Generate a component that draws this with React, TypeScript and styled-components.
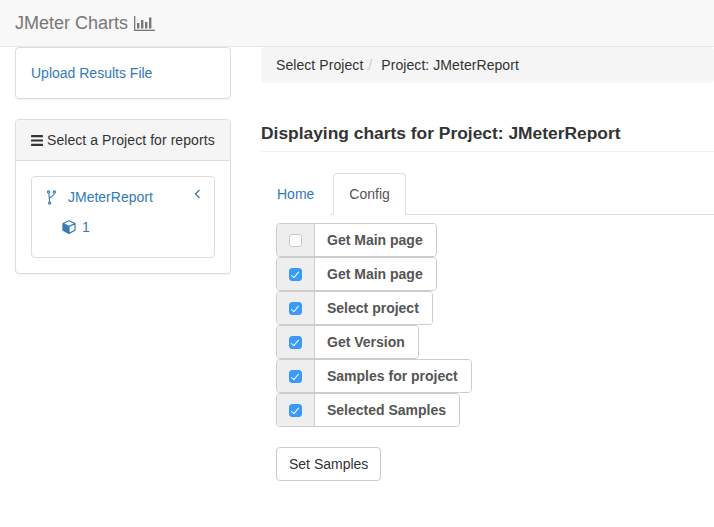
import React from 'react';
import styled, { createGlobalStyle } from 'styled-components';

const GlobalStyle = createGlobalStyle`
    html, body {
        margin: 0;
        padding: 0;
        background: #fff;
    }
    body {
        font-family: "Liberation Sans", Arial, sans-serif;
        font-size: 14px;
        line-height: 20px;
        color: #333;
        overflow: hidden;
    }
    * {
        box-sizing: border-box;
    }
`;

const Navbar = styled.div`
    height: 47px;
    padding: 0 15px;
    display: flex;
    align-items: center;
    gap: 6px;
    background: #f8f8f8;
    border-bottom: 1px solid #e7e7e7;
    color: #777;
    font-size: 18px;
`;

const Layout = styled.div`
    display: grid;
    grid-template-columns: 216px 1fr;
    column-gap: 30px;
    padding-left: 15px;
`;

const Sidebar = styled.div`
    display: flex;
    flex-direction: column;
    gap: 20px;
`;

const Panel = styled.div`
    background: #fff;
    border: 1px solid #ddd;
    border-radius: 4px;
    box-shadow: 0 1px 1px rgba(0, 0, 0, 0.05);
`;

const UploadBody = styled.div`
    height: 50px;
    padding: 15px;
`;

const Link = styled.a`
    color: #337ab7;
    text-decoration: none;
`;

const PanelHeading = styled.div`
    height: 41px;
    padding: 0 15px;
    display: flex;
    align-items: center;
    gap: 4px;
    background: #f5f5f5;
    border-bottom: 1px solid #ddd;
    border-radius: 3px 3px 0 0;
    white-space: nowrap;
    letter-spacing: 0.07px;
`;

const PanelBody = styled.div`
    padding: 15px;
`;

const TreeBox = styled.div`
    height: 82px;
    padding: 5px 15px;
    border: 1px solid #ddd;
    border-radius: 4px;
    color: #337ab7;
`;

const TreeRow = styled.div<{ $indent?: number }>`
    height: 30px;
    display: flex;
    align-items: center;
    padding-left: ${(p) => p.$indent ?? 0}px;
`;

const TreeLabel = styled.span`
    flex: 1;
    margin-left: 12px;
`;

const RowNumber = styled.span`
    margin-left: 6px;
`;

const Main = styled.div`
    min-width: 0;
`;

const Breadcrumb = styled.div`
    height: 36px;
    padding: 0 15px;
    display: flex;
    align-items: center;
    background: #f5f5f5;
    border-radius: 4px;
    color: #333;
    letter-spacing: 0.07px;
`;

const Divider = styled.span`
    padding: 0 5px;
    color: #ccc;
`;

const PageHeader = styled.div`
    margin-top: 38px;
    height: 31px;
    border-bottom: 1px solid #eee;
    font-size: 17.4px;
    font-weight: 700;
    line-height: 24px;
    color: #333;
`;

const TabList = styled.div`
    margin-top: 21px;
    height: 42px;
    display: flex;
    border-bottom: 1px solid #ddd;
`;

const Tab = styled.div<{ $active?: boolean }>`
    height: 42px;
    padding: 0 15px;
    margin-right: 3px;
    display: flex;
    align-items: center;
    border: 1px solid ${(p) => (p.$active ? '#ddd' : 'transparent')};
    border-bottom-color: ${(p) => (p.$active ? '#fff' : 'transparent')};
    border-radius: 4px 4px 0 0;
    background: #fff;
    color: ${(p) => (p.$active ? '#555' : '#337ab7')};
`;

const SampleList = styled.div`
    margin-top: 8px;
    padding-left: 15px;
    display: flex;
    flex-direction: column;
    align-items: flex-start;
`;

const SampleRow = styled.label`
    height: 34px;
    display: flex;
    border: 1px solid #ccc;
    border-radius: 4px;
    overflow: hidden;
`;

const Addon = styled.span`
    width: 38px;
    display: flex;
    align-items: center;
    justify-content: center;
    background: #eee;
    border-right: 1px solid #ccc;
`;

const Checkbox = styled.input.attrs({ type: 'checkbox', readOnly: true })`
    appearance: none;
    position: relative;
    width: 13px;
    height: 13px;
    margin: 0;
    border: 1px solid #c8c8c8;
    border-radius: 3px;
    background: #fff;

    &:checked {
        background: #3b99fc;
        border-color: #3b99fc;
    }

    &:checked::after {
        content: '';
        position: absolute;
        left: 3px;
        top: 1px;
        width: 3px;
        height: 7px;
        border: solid #fff;
        border-width: 0 1.5px 1.5px 0;
        transform: rotate(40deg);
    }
`;

const SampleName = styled.span`
    padding: 0 13px 0 12px;
    display: flex;
    align-items: center;
    font-weight: 700;
    color: #555;
    background: #fff;
    white-space: nowrap;
`;

const Button = styled.button`
    margin-top: 20px;
    height: 34px;
    padding: 0 12px;
    border: 1px solid #ccc;
    border-radius: 4px;
    background: #fff;
    color: #333;
    font: inherit;
`;

const ChartIcon = () => (
    <svg width="21" height="15" viewBox="0 0 21 15" fill="currentColor">
        <rect x="0" y="0" width="1.3" height="15" />
        <rect x="0" y="13.7" width="21" height="1.3" />
        <rect x="3" y="7" width="2.4" height="5.5" />
        <rect x="7" y="4" width="2.4" height="8.5" />
        <rect x="11" y="6" width="2.4" height="6.5" />
        <rect x="15" y="1.5" width="2.4" height="11" />
    </svg>
);

const MenuIcon = () => (
    <svg width="12" height="11" viewBox="0 0 12 11" fill="currentColor">
        <rect x="0" y="0" width="12" height="2.2" rx="0.4" />
        <rect x="0" y="4.4" width="12" height="2.2" rx="0.4" />
        <rect x="0" y="8.8" width="12" height="2.2" rx="0.4" />
    </svg>
);

const ForkIcon = () => (
    <svg width="9" height="15" viewBox="0 0 9 15" fill="none" stroke="currentColor" strokeWidth="1.1">
        <circle cx="1.6" cy="2" r="1.1" />
        <circle cx="7.4" cy="2" r="1.1" />
        <circle cx="2.6" cy="13" r="1.1" />
        <path d="M1.8 3.2 L2.6 11.8 M7.3 3.2 C7.2 6.5 3.2 6.5 2.4 8.5" />
    </svg>
);

const CubeIcon = () => (
    <svg width="14" height="14" viewBox="0 0 14 14">
        <path d="M7 7 L1 4 V10.2 L7 13.4 Z" fill="currentColor" />
        <path
            d="M7 .8 L13 3.5 V10.3 L7 13.4 L1 10.3 V3.5 Z M1 3.6 L7 6.4 L13 3.6 M7 6.4 V13.2"
            fill="none"
            stroke="currentColor"
            strokeWidth="1.2"
            strokeLinejoin="round"
        />
    </svg>
);

const AngleIcon = () => (
    <svg width="7" height="10" viewBox="0 0 7 10" fill="none" stroke="currentColor" strokeWidth="1.3">
        <path d="M5.5 1 L1.5 5 L5.5 9" />
    </svg>
);

const AngleWrap = styled.span`
    display: flex;
    margin: -6px -2px 0 0;
`;

const samples: { name: string; checked: boolean }[] = [
    { name: 'Get Main page', checked: false },
    { name: 'Get Main page', checked: true },
    { name: 'Select project', checked: true },
    { name: 'Get Version', checked: true },
    { name: 'Samples for project', checked: true },
    { name: 'Selected Samples', checked: true },
];

const App: React.FC = () => (
    <>
        <GlobalStyle />
        <Navbar>
            JMeter Charts <ChartIcon />
        </Navbar>
        <Layout>
            <Sidebar>
                <Panel>
                    <UploadBody>
                        <Link>Upload Results File</Link>
                    </UploadBody>
                </Panel>
                <Panel>
                    <PanelHeading>
                        <MenuIcon /> Select a Project for reports
                    </PanelHeading>
                    <PanelBody>
                        <TreeBox>
                            <TreeRow>
                                <ForkIcon />
                                <TreeLabel>JMeterReport</TreeLabel>
                                <AngleWrap>
                                    <AngleIcon />
                                </AngleWrap>
                            </TreeRow>
                            <TreeRow $indent={15}>
                                <CubeIcon />
                                <RowNumber>1</RowNumber>
                            </TreeRow>
                        </TreeBox>
                    </PanelBody>
                </Panel>
            </Sidebar>
            <Main>
                <Breadcrumb>
                    Select Project
                    <Divider>/</Divider>
                    &nbsp;Project: JMeterReport
                </Breadcrumb>
                <PageHeader>Displaying charts for Project: JMeterReport</PageHeader>
                <TabList>
                    <Tab>Home</Tab>
                    <Tab $active>Config</Tab>
                </TabList>
                <SampleList>
                    {samples.map((sample, index) => (
                        <SampleRow key={`sample-${index}`}>
                            <Addon>
                                <Checkbox defaultChecked={sample.checked} />
                            </Addon>
                            <SampleName>{sample.name}</SampleName>
                        </SampleRow>
                    ))}
                    <Button>Set Samples</Button>
                </SampleList>
            </Main>
        </Layout>
    </>
);

export default App;
